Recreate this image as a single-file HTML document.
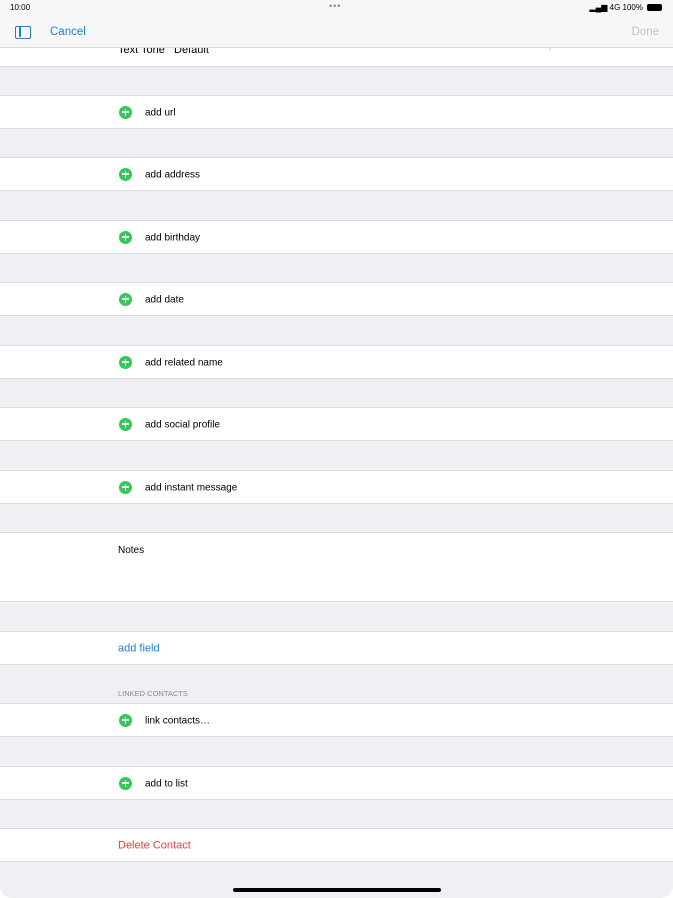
<!DOCTYPE html>
<html><head><style>
*{margin:0;padding:0;box-sizing:border-box}
body{width:673px;height:898px;background:#fff;font-family:"Liberation Sans",sans-serif;position:relative;overflow:hidden}
#page{position:absolute;left:0;top:0;width:673px;height:898px;background:#efeff4;border-radius:0 0 12px 12px}
.hdr{position:absolute;left:0;top:0;width:673px;height:48px;background:#f7f7f7;border-bottom:1px solid #d8d8d8;z-index:2}
.row{position:absolute;left:0;width:673px;background:#fff;border-top:1px solid #dcdce0;border-bottom:1px solid #dcdce0;font-size:10px;color:#000}
.add .ic{position:absolute;left:119px;top:50%;margin-top:-6.5px;width:13px;height:13px;border-radius:50%;background:#34c759}
.add .ic:before{content:"";position:absolute;left:3px;top:5.75px;width:7px;height:1.5px;background:#fff}
.add .ic:after{content:"";position:absolute;left:5.75px;top:3px;width:1.5px;height:7px;background:#fff}
.add span{position:absolute;left:145px;top:50%;transform:translateY(-40%)}
.lbl{position:absolute;left:118px;top:50%;transform:translateY(-45%);font-size:11px}
</style></head><body><div id="page">
<div class="hdr">
<div style="position:absolute;left:10px;top:3px;font-size:8px">10:00</div>
<div style="position:absolute;left:329px;top:1px;font-size:9px;color:#888;letter-spacing:1px">•••</div>
<div style="position:absolute;right:30px;top:3px;font-size:8px">▂▄▆ 4G 100%</div>
<div style="position:absolute;right:11px;top:4px;width:15px;height:7px;background:#000;border-radius:2px"></div>
<div style="position:absolute;left:15px;top:26px;width:16px;height:13px;border:1.5px solid #1a7fe0;border-radius:2px"><div style="position:absolute;left:3px;top:0;width:1.5px;height:10px;background:#1a7fe0"></div></div>
<div style="position:absolute;left:50px;top:26px;font-size:11.5px;color:#1a7fe0">Cancel</div>
<div style="position:absolute;right:14px;top:26px;font-size:11.5px;color:#c4c4c6">Done</div>
</div>
<div class="row" style="top:40px;height:27px;border-top:none"><span style="position:absolute;left:118px;top:4px;font-size:11px">Text Tone&nbsp;&nbsp;&nbsp;Default</span><span style="position:absolute;left:548px;top:3px;color:#c7c7cc">›</span></div>
<div class="row add" style="top:95px;height:34px"><div class="ic"></div><span>add url</span></div>
<div class="row add" style="top:157px;height:34px"><div class="ic"></div><span>add address</span></div>
<div class="row add" style="top:220px;height:34px"><div class="ic"></div><span>add birthday</span></div>
<div class="row add" style="top:282px;height:34px"><div class="ic"></div><span>add date</span></div>
<div class="row add" style="top:345px;height:34px"><div class="ic"></div><span>add related name</span></div>
<div class="row add" style="top:407px;height:34px"><div class="ic"></div><span>add social profile</span></div>
<div class="row add" style="top:470px;height:34px"><div class="ic"></div><span>add instant message</span></div>
<div class="row" style="top:532px;height:70px"><span style="position:absolute;left:118px;top:12px">Notes</span></div>
<div class="row" style="top:631px;height:34px"><span class="lbl" style="color:#1a7fe0">add field</span></div>
<div style="position:absolute;left:118px;top:689px;font-size:7.5px;color:#8a8a8e">LINKED CONTACTS</div>
<div class="row add" style="top:703px;height:34px"><div class="ic"></div><span>link contacts…</span></div>
<div class="row add" style="top:766px;height:34px"><div class="ic"></div><span>add to list</span></div>
<div class="row" style="top:828px;height:34px"><span class="lbl" style="color:#e8433a">Delete Contact</span></div>
<div style="position:absolute;left:233px;top:888px;width:208px;height:4px;border-radius:2px;background:#000"></div>
</div></body></html>
